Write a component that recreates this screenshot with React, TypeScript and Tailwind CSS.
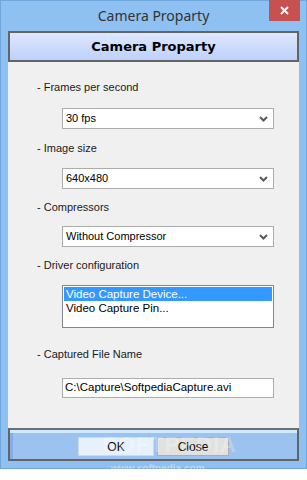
import { useState } from 'react';

const ui = { fontFamily: '"Liberation Sans", Arial, sans-serif' };

function Chevron() {
  return (
    <svg width="9" height="6" viewBox="0 0 9 6" className="shrink-0">
      <polyline points="1,1 4.5,4.5 8,1" fill="none" stroke="#5a5a5a" strokeWidth="2" />
    </svg>
  );
}

function Combo({ value }: { value: string }) {
  return (
    <div className="ml-[25px] flex h-[21px] w-[212px] items-center justify-between border border-[#acacac] bg-white pl-[3px] pr-[5px] text-[11px] text-black">
      <span>{value}</span>
      <Chevron />
    </div>
  );
}

function Label({ text, className }: { text: string; className: string }) {
  return <p className={`h-[16px] text-[11px] leading-[16px] text-[#1a1a1a] ${className}`}>{text}</p>;
}

export default function App() {
  const [selected, setSelected] = useState(0);
  const drivers = ['Video Capture Device...', 'Video Capture Pin...'];

  return (
    <div className="relative h-[480px] w-[307px] bg-white" style={ui}>
      <div className="flex h-[469px] flex-col border border-[#6fa7dc] bg-[#8ec1f1] px-[7px] pb-[7px]">
        <div className="relative flex h-[30px] shrink-0 items-center justify-center">
          <span className="-mt-[1px] text-[14px] text-[#333]" style={{ fontFamily: '"Noto Sans", sans-serif' }}>
            Camera Proparty
          </span>
          <div className="absolute right-[-1px] top-[-1px] flex h-[21px] w-[31px] items-center justify-center bg-[#c75050]">
            <svg width="9" height="9" viewBox="0 0 9 9">
              <path d="M1 1 L8 8 M8 1 L1 8" stroke="#fff" strokeWidth="2" />
            </svg>
          </div>
        </div>

        <div className="flex h-[31px] shrink-0 items-center justify-center border-2 border-[#646464] bg-gradient-to-b from-[#dfe7ff] to-[#bcd1fb]">
          <span className="text-[13px] font-bold text-black" style={{ fontFamily: '"DejaVu Sans", sans-serif' }}>
            Camera Proparty
          </span>
        </div>

        <div className="flex h-[366px] shrink-0 flex-col bg-[#f0f0f0] pl-[29px]">
          <Label text="- Frames per second" className="mt-[17px]" />
          <div className="mt-[13px]"><Combo value="30 fps" /></div>

          <Label text="- Image size" className="mt-[11px]" />
          <div className="mt-[12px]"><Combo value="640x480" /></div>

          <Label text="- Compressors" className="mt-[10px]" />
          <div className="mt-[11px]"><Combo value="Without Compressor" /></div>

          <Label text="- Driver configuration" className="mt-[10px]" />
          <div className="ml-[25px] mt-[12px] h-[43px] w-[212px] border border-[#828790] bg-white p-[1px] text-[11.5px]">
            {drivers.map((d, i) => (
              <div
                key={d}
                onClick={() => setSelected(i)}
                className={`h-[14px] pl-[2px] leading-[14px] ${selected === i ? 'bg-[#3399ff] text-white' : 'text-black'}`}
              >
                {d}
              </div>
            ))}
          </div>

          <Label text="- Captured File Name" className="mt-[18px]" />
          <div className="ml-[25px] mt-[16px] flex h-[20px] w-[212px] items-center border border-[#abadb3] bg-white pl-[2px] text-[11.5px] text-black">
            C:\Capture\SoftpediaCapture.avi
          </div>
        </div>

        <div className="relative flex h-[33px] shrink-0 items-center gap-[3px] border-2 border-[#646464] border-t-[#6f6f6f] bg-[#9cc2f0] pl-[68px] pt-[3px] shadow-[inset_0_3px_0_#cdeaff,inset_3px_0_0_#86aee0]">
          <button className="h-[19px] w-[76px] border border-[#c5dcf2] bg-[#e6f1fc] text-[12px] text-black">OK</button>
          <button className="h-[19px] w-[72px] border border-[#adadad] bg-[#e1e1e1] text-[12px] text-black">Close</button>
          <span className="pointer-events-none absolute left-[92px] top-[-2px] text-[22px] font-bold tracking-[1px] text-white/25">
            SOFTPEDIA
          </span>
        </div>
      </div>
      <span className="pointer-events-none absolute left-[111px] top-[461px] text-[10px] font-bold text-white/40">
        www.softpedia.com
      </span>
    </div>
  );
}
